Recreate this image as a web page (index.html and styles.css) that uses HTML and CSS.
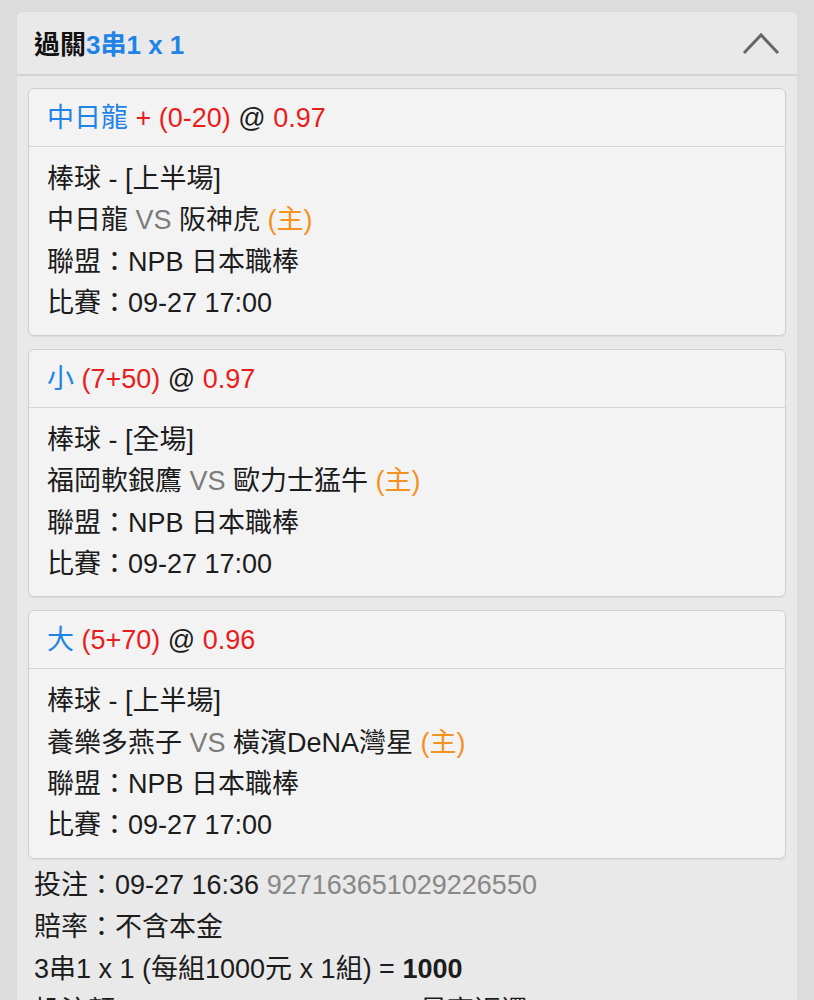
FILE: index.html
```html
<!DOCTYPE html>
<html>
<head>
    <title>過關</title>
    <link rel="stylesheet" href="styles.css">
</head>
<body>
    <div class="panel">
        <div class="panel-head">
            <h2>過關<span class="blue">3串1 x 1</span></h2>
            <svg class="chevron" width="38" height="24" viewBox="0 0 38 24">
                <polyline points="2,21 19,3 36,21" fill="none" stroke="#666" stroke-width="3"/>
            </svg>
        </div>
        <div class="panel-body">
            <div class="card">
                <div class="card-head">
                    <span class="blue">中日龍</span> <span class="red">+ (0-20)</span> @ <span class="red">0.97</span>
                </div>
                <div class="card-body">
                    <p>棒球 - [上半場]</p>
                    <p>中日龍 <span class="gray">VS</span> 阪神虎 <span class="orange">(主)</span></p>
                    <p>聯盟：NPB 日本職棒</p>
                    <p>比賽：09-27 17:00</p>
                </div>
            </div>
            <div class="card">
                <div class="card-head">
                    <span class="blue">小</span> <span class="red">(7+50)</span> @ <span class="red">0.97</span>
                </div>
                <div class="card-body">
                    <p>棒球 - [全場]</p>
                    <p>福岡軟銀鷹 <span class="gray">VS</span> 歐力士猛牛 <span class="orange">(主)</span></p>
                    <p>聯盟：NPB 日本職棒</p>
                    <p>比賽：09-27 17:00</p>
                </div>
            </div>
            <div class="card">
                <div class="card-head">
                    <span class="blue">大</span> <span class="red">(5+70)</span> @ <span class="red">0.96</span>
                </div>
                <div class="card-body">
                    <p>棒球 - [上半場]</p>
                    <p>養樂多燕子 <span class="gray">VS</span> 橫濱DeNA灣星 <span class="orange">(主)</span></p>
                    <p>聯盟：NPB 日本職棒</p>
                    <p>比賽：09-27 17:00</p>
                </div>
            </div>
            <div class="summary">
                <p>投注：09-27 16:36 <span class="ticket">927163651029226550</span></p>
                <p>賠率：不含本金</p>
                <p>3串1 x 1 (每組1000元 x 1組) = <b>1000</b></p>
                <div class="amounts">
                    <p>投注額：1000</p>
                    <p>最高返還：6606</p>
                </div>
            </div>
        </div>
    </div>
</body>
</html>
```

FILE: styles.css
```css
* {
    box-sizing: border-box;
    margin: 0;
    padding: 0;
}

body {
    background-color: #dcdcdc;
    font-family: "Liberation Sans", "Noto Sans CJK TC", sans-serif;
    font-size: 27px;
    color: #1c1c1c;
    padding: 12px 17px 0;
}

.blue {
    color: #2283e6;
}

.red {
    color: #ea1d1d;
}

.gray {
    color: #7b7b7b;
}

.orange {
    color: #f3921f;
}

.panel {
    background-color: #e9e9e9;
    border-radius: 6px 6px 0 0;
}

.panel-head {
    display: flex;
    align-items: center;
    justify-content: space-between;
    height: 64px;
    padding: 0 17px;
    border-bottom: 2px solid #d3d3d3;
}

.panel-head h2 {
    font-size: 26px;
    font-weight: bold;
    color: #111;
    margin-top: -2px;
}

.chevron {
    margin-top: 2px;
}

.panel-body {
    padding: 12px 11px 0;
}

.card {
    background-color: #f3f3f3;
    border: 1px solid #cfcfcf;
    border-radius: 6px;
    margin-bottom: 13px;
    box-shadow: 0 1px 1px rgba(0, 0, 0, 0.06);
}

.card-head {
    height: 58px;
    line-height: 59px;
    padding: 0 18px;
    border-bottom: 1px solid #d6d6d6;
}

.card-body {
    padding: 12px 18px 11px;
    line-height: 41.3px;
}

.summary {
    padding: 0 6px;
    margin-top: -8px;
    line-height: 42px;
}

.ticket {
    color: #888;
}

.amounts {
    display: grid;
    grid-template-columns: 386px 1fr;
}
```
